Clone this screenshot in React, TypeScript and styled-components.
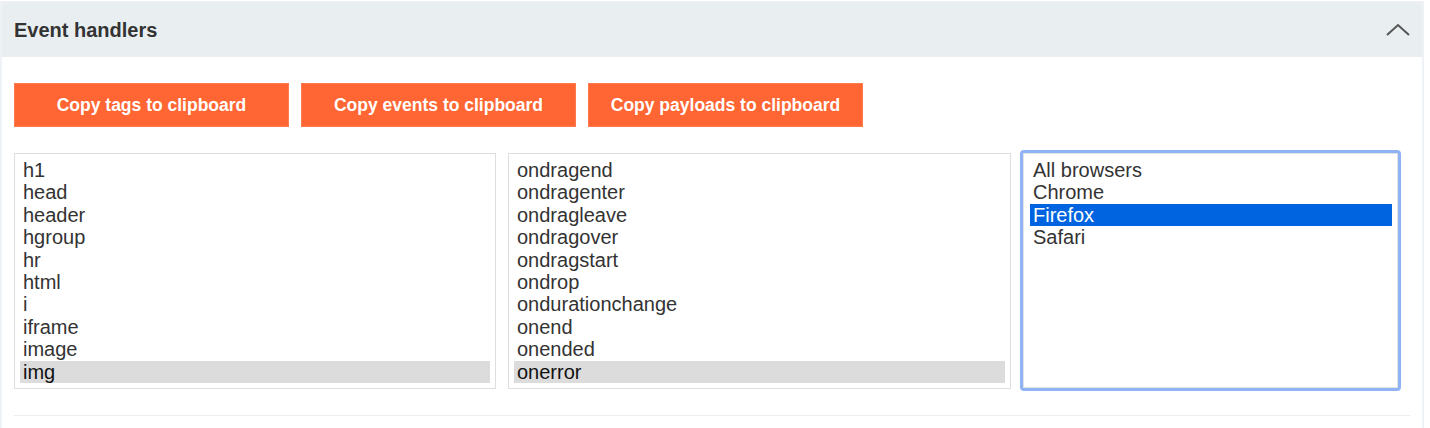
import React from "react";
import styled, { createGlobalStyle, css } from "styled-components";

const Global = createGlobalStyle`
  html, body { margin: 0; padding: 0; background: #ffffff; }
  body { font-family: "Liberation Sans", Arial, sans-serif; color: #333333; }
`;

const Panel = styled.section`
  width: 1420px;
  margin-top: 1px;
  border: 2px solid #eef2f5;
  border-top-width: 1px;
  background: #ffffff;
`;

const Header = styled.header`
  height: 55px;
  background: #e9eef1;
  display: flex;
  align-items: center;
  justify-content: space-between;
  padding: 0 12px 0 12px;
`;

const Title = styled.h2`
  margin: 0;
  font-size: 20px;
  font-weight: 700;
  color: #333333;
  padding-top: 1px;
`;

const Body = styled.div`
  padding: 26px 12px 0 12px;
`;

const Toolbar = styled.div`
  display: flex;
  gap: 12px;
`;

const CopyButton = styled.button`
  width: 275px;
  height: 44px;
  background: #ff6633;
  border: 1px solid #ff7a4f;
  color: #ffffff;
  font-family: "Liberation Sans", Arial, sans-serif;
  font-weight: 700;
  font-size: 17.5px;
  padding: 0;
  cursor: pointer;
`;

const Lists = styled.div`
  display: flex;
  align-items: flex-start;
  margin-top: 26px;
`;

const ListBox = styled.div<{ $width: number; $focused?: boolean; $gap?: number }>`
  box-sizing: border-box;
  width: ${(p) => p.$width}px;
  height: 236px;
  margin-left: ${(p) => p.$gap ?? 0}px;
  border: 1px solid #dedede;
  padding: 5px 5px;
  background: #fff;
  ${(p) =>
    p.$focused &&
    css`
      height: 241px;
      margin-top: -3px;
      border: 3px solid #8fb3f5;
      border-radius: 4px;
      box-shadow: inset 0 0 0 1px #e2e2e2;
      padding: 6px 6px 6px 7px;
    `}
`;

const Option = styled.div<{ $state?: "gray" | "blue" }>`
  height: 22.4px;
  line-height: 22.4px;
  font-size: 20px;
  padding-left: 3px;
  white-space: nowrap;
  color: ${(p) => (p.$state === "blue" ? "#ffffff" : p.$state === "gray" ? "#111111" : "#333333")};
  background: ${(p) => (p.$state === "blue" ? "#0064e1" : p.$state === "gray" ? "#dcdcdc" : "transparent")};
`;

const Divider = styled.hr`
  margin: 24px 0 0 0;
  border: 0;
  border-top: 1px solid #e9eef1;
  width: 1396px;
  height: 12px;
`;

const Chevron = () => (
  <svg width="24" height="13" viewBox="0 0 24 13" fill="none">
    <path d="M1 12 L12 2 L23 12" stroke="#555" strokeWidth="2" strokeLinejoin="miter" />
  </svg>
);

const tags = ["h1", "head", "header", "hgroup", "hr", "html", "i", "iframe", "image", "img"];
const events = [
  "ondragend",
  "ondragenter",
  "ondragleave",
  "ondragover",
  "ondragstart",
  "ondrop",
  "ondurationchange",
  "onend",
  "onended",
  "onerror",
];
const browsers = ["All browsers", "Chrome", "Firefox", "Safari"];

export default function App() {
  return (
    <>
      <Global />
      <Panel>
        <Header>
          <Title>Event handlers</Title>
          <Chevron />
        </Header>
        <Body>
          <Toolbar>
            <CopyButton>Copy tags to clipboard</CopyButton>
            <CopyButton>Copy events to clipboard</CopyButton>
            <CopyButton>Copy payloads to clipboard</CopyButton>
          </Toolbar>
          <Lists>
            <ListBox $width={482}>
              {tags.map((t) => (
                <Option key={t} $state={t === "img" ? "gray" : undefined}>
                  {t}
                </Option>
              ))}
            </ListBox>
            <ListBox $width={503} $gap={12}>
              {events.map((t) => (
                <Option key={t} $state={t === "onerror" ? "gray" : undefined}>
                  {t}
                </Option>
              ))}
            </ListBox>
            <ListBox $width={381} $gap={9} $focused>
              {browsers.map((t) => (
                <Option key={t} $state={t === "Firefox" ? "blue" : undefined}>
                  {t}
                </Option>
              ))}
            </ListBox>
          </Lists>
          <Divider />
        </Body>
      </Panel>
    </>
  );
}
